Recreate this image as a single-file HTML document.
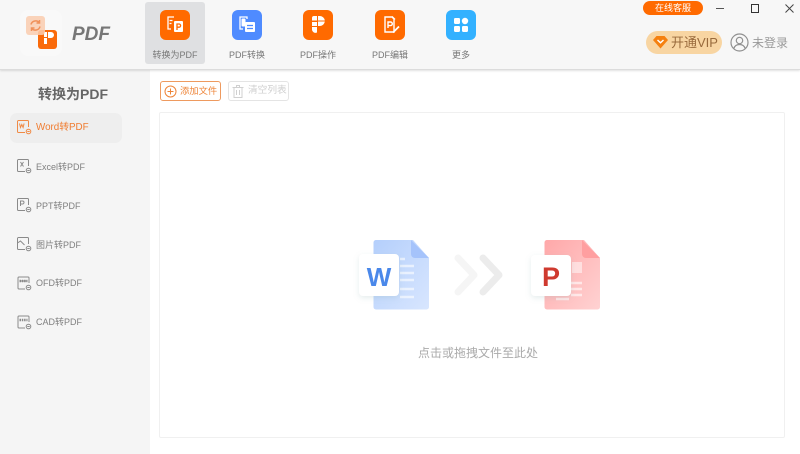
<!DOCTYPE html>
<html lang="zh">
<head>
<meta charset="utf-8">
<title>转换为PDF</title>
<style>
html,body{margin:0;padding:0;width:800px;height:454px;overflow:hidden;background:#fff;font-family:"Liberation Sans","Noto Sans CJK SC",sans-serif}
div,span,svg{position:absolute;box-sizing:border-box}
#head{left:0;top:0;width:800px;height:70px;background:#f7f7f7;border-bottom:1px solid #dcdcdc;box-shadow:0 1px 2px rgba(0,0,0,.12);z-index:3}
#side{left:0;top:70px;width:150px;height:384px;background:#f5f5f5}
.sel{left:145px;top:2px;width:60px;height:62px;background:#dfe0e2;border-radius:3px}
.ic{top:10px;width:30px;height:30px;border-radius:6px;background:#ff6a00}
.lab{top:48px;width:80px;text-align:center;font-size:9px;line-height:14px;color:#777;white-space:nowrap}
.item{left:36px;width:100px;font-size:9px;line-height:14px;color:#808080;white-space:nowrap}
.si{left:16px;width:16px;height:16px}
</style>
</head>
<body>
<div id="side"></div>
<div style="left:38px;top:84px;font-size:14px;line-height:20px;font-weight:bold;color:#666;white-space:nowrap">转换为PDF</div>
<div style="left:10px;top:113px;width:112px;height:30px;background:#eee;border-radius:7px"></div>

<svg class="si" style="top:119px" viewBox="0 0 16 16" fill="none" stroke="#f08a45" stroke-width="1"><path d="M12.500 8V2.500a1 1 0 0 0-1-1h-9a1 1 0 0 0-1 1v10a1 1 0 0 0 1 1H9"/><circle cx="12.500" cy="12.500" r="2.300"/><path d="M11.300 12.500h2.400M3.500 4.500l1 4 1.300-3 1.300 3 1-4"/></svg>
<div class="item" style="top:121px;color:#f07c30;font-size:9.800px">Word转PDF</div>

<svg class="si" style="top:158px" viewBox="0 0 16 16" fill="none" stroke="#8a8a8a" stroke-width="1"><path d="M12.500 8V2.500a1 1 0 0 0-1-1h-9a1 1 0 0 0-1 1v10a1 1 0 0 0 1 1H9"/><circle cx="12.500" cy="12.500" r="2.300"/><path d="M11.300 12.500h2.400M4.500 4l3 4.500M7.500 4l-3 4.500"/></svg>
<div class="item" style="top:160px">Excel转PDF</div>

<svg class="si" style="top:197px" viewBox="0 0 16 16" fill="none" stroke="#8a8a8a" stroke-width="1"><path d="M12.500 8V2.500a1 1 0 0 0-1-1h-9a1 1 0 0 0-1 1v10a1 1 0 0 0 1 1H9"/><circle cx="12.500" cy="12.500" r="2.300"/><path d="M11.300 12.500h2.400M4.500 9V4h2a1.500 1.500 0 0 1 0 3h-2"/></svg>
<div class="item" style="top:199px">PPT转PDF</div>

<svg class="si" style="top:236px" viewBox="0 0 16 16" fill="none" stroke="#8a8a8a" stroke-width="1"><path d="M12.500 8V2.500a1 1 0 0 0-1-1h-9a1 1 0 0 0-1 1v10a1 1 0 0 0 1 1H9"/><circle cx="12.500" cy="12.500" r="2.300"/><path d="M11.300 12.500h2.400M1.500 7l3-2 4 4"/></svg>
<div class="item" style="top:238px">图片转PDF</div>

<svg class="si" style="top:275px" viewBox="0 0 16 16" fill="none" stroke="#8a8a8a" stroke-width="1"><path d="M13 8V3a1 1 0 0 0-1-1H3a1 1 0 0 0-1 1v10a1 1 0 0 0 1 1h6"/><circle cx="12.500" cy="12.500" r="2.300"/><path d="M11.300 12.500h2.400M3.500 6h8" /><path d="M3.500 6h8" stroke-width="2.500" stroke-dasharray="1.500 .8"/></svg>
<div class="item" style="top:276px">OFD转PDF</div>

<svg class="si" style="top:314px" viewBox="0 0 16 16" fill="none" stroke="#8a8a8a" stroke-width="1"><path d="M13 8V3a1 1 0 0 0-1-1H3a1 1 0 0 0-1 1v10a1 1 0 0 0 1 1h6"/><circle cx="12.500" cy="12.500" r="2.300"/><path d="M11.300 12.500h2.400"/><path d="M3.500 6h8" stroke-width="2.500" stroke-dasharray="1.500 .8"/></svg>
<div class="item" style="top:315px">CAD转PDF</div>

<div id="head">
  <div style="left:20px;top:10px;width:42px;height:46px;background:#f9f9f9;border-radius:8px"></div>
  <div style="left:38px;top:30px;width:19px;height:19px;background:#fa6a0a;border-radius:3px"></div>
  <svg style="left:42px;top:31px;width:12px;height:16px" viewBox="0 0 12 16"><path d="M2 1h3v5H2zM6 1h3a3 3 0 0 1 0 6H6zM2 7h3v6H2z" fill="#fff"/></svg>
  <div style="left:26px;top:16px;width:19px;height:19px;background:rgba(250,205,175,.85);border-radius:3px"></div>
  <svg style="left:28px;top:18px;width:15px;height:15px" viewBox="0 0 15 15" fill="none" stroke="#f0915a" stroke-width="1.500"><path d="M3 6.500a4.700 4.700 0 0 1 8.500-1.500M12 8.500a4.700 4.700 0 0 1-8.500 1.500M11.500 2v3h-3M3.500 13v-3h3"/></svg>
  <div style="left:72px;top:23px;font-size:19px;line-height:23px;font-weight:bold;font-style:italic;color:#777">PDF</div>

  <div class="sel"></div>
  <div class="ic" style="left:160px"></div>
  <svg style="left:166px;top:15px;width:19px;height:20px" viewBox="0 0 19 20" fill="none" stroke="#fff" stroke-width="1.300"><path d="M8 2H2v12h3M3.500 5.500h3M3.500 8.500h2"/><rect x="8" y="6" width="9" height="11" rx="1" fill="#fff" stroke="none"/><path d="M11 15V9h2a1.500 1.500 0 0 1 0 3.200h-2" stroke="#ff6a00"/></svg>
  <div class="lab" style="left:135px;top:48px">转换为PDF</div>

  <div class="ic" style="left:232px;background:#4f8bff"></div>
  <svg style="left:238px;top:15px;width:19px;height:20px" viewBox="0 0 19 20" fill="none" stroke="#fff" stroke-width="1.300"><path d="M9 4V2H2v12h3"/><rect x="7" y="7" width="10" height="10" rx="1" fill="#fff" stroke="none"/><path d="M9 10.500h6M9 13.500h6" stroke="#4f8bff"/><rect x="3.500" y="3.500" width="4" height="8" rx="1" fill="#fff" stroke="none"/></svg>
  <div class="lab" style="left:207px">PDF转换</div>

  <div class="ic" style="left:303px"></div>
  <svg style="left:311px;top:15px;width:15px;height:20px" viewBox="0 0 15 20"><path d="M1 7h5v4H1zM1 12h5v5.500a3.500 3.500 0 0 1-5-3zM7 1h2a5 5 0 0 1 4.800 4.500H7zM7 6.500h6.800A5 5 0 0 1 9 11H7zM3 1h3v4.500H1V3a2 2 0 0 1 2-2z" fill="#fff"/></svg>
  <div class="lab" style="left:278px">PDF操作</div>

  <div class="ic" style="left:375px"></div>
  <svg style="left:381px;top:15px;width:20px;height:20px" viewBox="0 0 20 20" fill="none" stroke="#fff" stroke-width="1.400"><path d="M11 2H4v15h9V4zM11 1.500L14 4.500"/><path d="M7 13V7h2.500a1.800 1.800 0 0 1 0 3.600H7"/><path d="M12 17.500l6-6" stroke-width="1.800"/></svg>
  <div class="lab" style="left:350px">PDF编辑</div>

  <div class="ic" style="left:446px;background:#33b1ff"></div>
  <svg style="left:453px;top:17px;width:16px;height:16px" viewBox="0 0 16 16" fill="#fff"><rect x="1" y="1" width="6" height="6" rx="1.200"/><rect x="9" y="9" width="6" height="6" rx="1.200"/><rect x="1" y="9" width="6" height="6" rx="1.200"/><circle cx="12" cy="4" r="3.200"/></svg>
  <div class="lab" style="left:421px">更多</div>

  <div style="left:643px;top:1px;width:60px;height:14px;background:#ff6a00;border-radius:7px;color:#fff;font-size:9px;line-height:14px;text-align:center;white-space:nowrap">在线客服</div>
  <div style="left:716px;top:8px;width:8px;height:1px;background:#555"></div>
  <div style="left:751px;top:4px;width:8px;height:9px;border:1px solid #333"></div>
  <svg style="left:785px;top:4px;width:9px;height:9px" viewBox="0 0 9 9" stroke="#444" fill="none"><path d="M.5.500l8 8M8.500.500l-8 8"/></svg>

  <div style="left:646px;top:31px;width:76px;height:23px;background:#f8d5a2;border-radius:12px"></div>
  <svg style="left:653px;top:35px;width:15px;height:14px" viewBox="0 0 15 14"><path d="M3.500 1h8L15 5l-7.500 8.500L0 5z" fill="#f5800f"/><path d="M4.500 5l3 2.800 3-2.800" fill="none" stroke="#fff" stroke-width="1.400"/></svg>
  <div style="left:671px;top:34px;font-size:13px;line-height:18px;color:#996a3c;white-space:nowrap">开通VIP</div>
  <svg style="left:730px;top:33px;width:19px;height:19px" viewBox="0 0 19 19" fill="none" stroke="#909090" stroke-width="1.200"><circle cx="9.500" cy="9.500" r="8.500"/><circle cx="9.500" cy="7.500" r="3.200"/><path d="M3.800 15.500c1-3 3-4 5.700-4s4.700 1 5.700 4"/></svg>
  <div style="left:752px;top:35px;font-size:12px;line-height:16px;color:#999;white-space:nowrap">未登录</div>
</div>

<div style="left:160px;top:81px;width:61px;height:20px;border:1px solid #ee9a5f;border-radius:3px"></div>
<svg style="left:164px;top:85px;width:13px;height:13px" viewBox="0 0 13 13" fill="none" stroke="#ee8438"><circle cx="6.500" cy="6.500" r="5.500"/><path d="M3.500 6.500h6M6.500 3.500v6"/></svg>
<div style="left:180px;top:84px;font-size:9.300px;line-height:14px;color:#ee8438;white-space:nowrap">添加文件</div>

<div style="left:228px;top:81px;width:61px;height:20px;border:1px solid #e4e4e4;border-radius:3px"></div>
<svg style="left:232px;top:85px;width:12px;height:13px" viewBox="0 0 12 13" fill="none" stroke="#d0d0d0"><path d="M.5 2.500h11M4.500 2.500v-2h3v2M2 2.500v10h8v-10M4.500 5v5M7.500 5v5"/></svg>
<div style="left:248px;top:84px;font-size:9.700px;line-height:14px;color:#cfcfcf;white-space:nowrap">清空列表</div>

<div style="left:159px;top:112px;width:626px;height:326px;border:1px solid #f0f0f0;border-radius:2px"></div>

<svg style="left:350px;top:230px;width:260px;height:90px" viewBox="0 0 260 90">
<defs>
<linearGradient id="b" x1="0" y1="0" x2="1" y2="1"><stop offset="0" stop-color="#b4cffc"/><stop offset="1" stop-color="#d8e6fe"/></linearGradient>
<linearGradient id="r" x1="0" y1="0" x2="1" y2="1"><stop offset="0" stop-color="#ffa8a9"/><stop offset="1" stop-color="#ffd2d2"/></linearGradient>
<filter id="s" x="-30%" y="-30%" width="160%" height="160%"><feDropShadow dx="0" dy="2" stdDeviation="3" flood-color="#8aa" flood-opacity=".22"/></filter>
</defs>
<path d="M26 10h37l16 18v49a2.500 2.500 0 0 1-2.500 2.500H26a2.500 2.500 0 0 1-2.500-2.500V12.500A2.500 2.500 0 0 1 26 10z" fill="url(#b)"/>
<path d="M61 10l18 18H65a4 4 0 0 1-4-4z" fill="#a5c3fb"/>
<path d="M50 29h5M50 36h14M50 43h14M50 50h14M50 59h14M50 67h14" stroke="#fff" stroke-opacity=".6" stroke-width="2.500"/>
<rect x="9" y="24" width="40" height="42" rx="4" fill="#fff" filter="url(#s)"/>
<text x="29" y="56" text-anchor="middle" font-family="Liberation Sans" font-weight="bold" font-size="26" fill="#4a88ea">W</text>
<path d="M108 28l16 17-16 17" fill="none" stroke="#f5f5f5" stroke-width="7" stroke-linecap="round" stroke-linejoin="round"/>
<path d="M133 28l16 17-16 17" fill="none" stroke="#ececec" stroke-width="7" stroke-linecap="round" stroke-linejoin="round"/>
<path d="M197 10h37l16 18v49a2.500 2.500 0 0 1-2.500 2.500H197a2.500 2.500 0 0 1-2.500-2.500V12.500A2.500 2.500 0 0 1 197 10z" fill="url(#r)"/>
<path d="M232 10l18 18h-14a4 4 0 0 1-4-4z" fill="#ff9fa0"/>
<path d="M222 32h10v11h-10z" fill="#fff" fill-opacity=".5"/>
<path d="M221 53h11M221 59h11M221 65h11M206 69h13" stroke="#fff" stroke-opacity=".6" stroke-width="2.500"/>
<rect x="181" y="25" width="40" height="41" rx="4" fill="#fff" filter="url(#s)"/>
<text x="201" y="56" text-anchor="middle" font-family="Liberation Sans" font-weight="bold" font-size="27" fill="#cf3a2f">P</text>
</svg>

<div style="left:378px;top:344px;width:200px;text-align:center;font-size:12px;line-height:18px;color:#aaa;white-space:nowrap">点击或拖拽文件至此处</div>
</body>
</html>
